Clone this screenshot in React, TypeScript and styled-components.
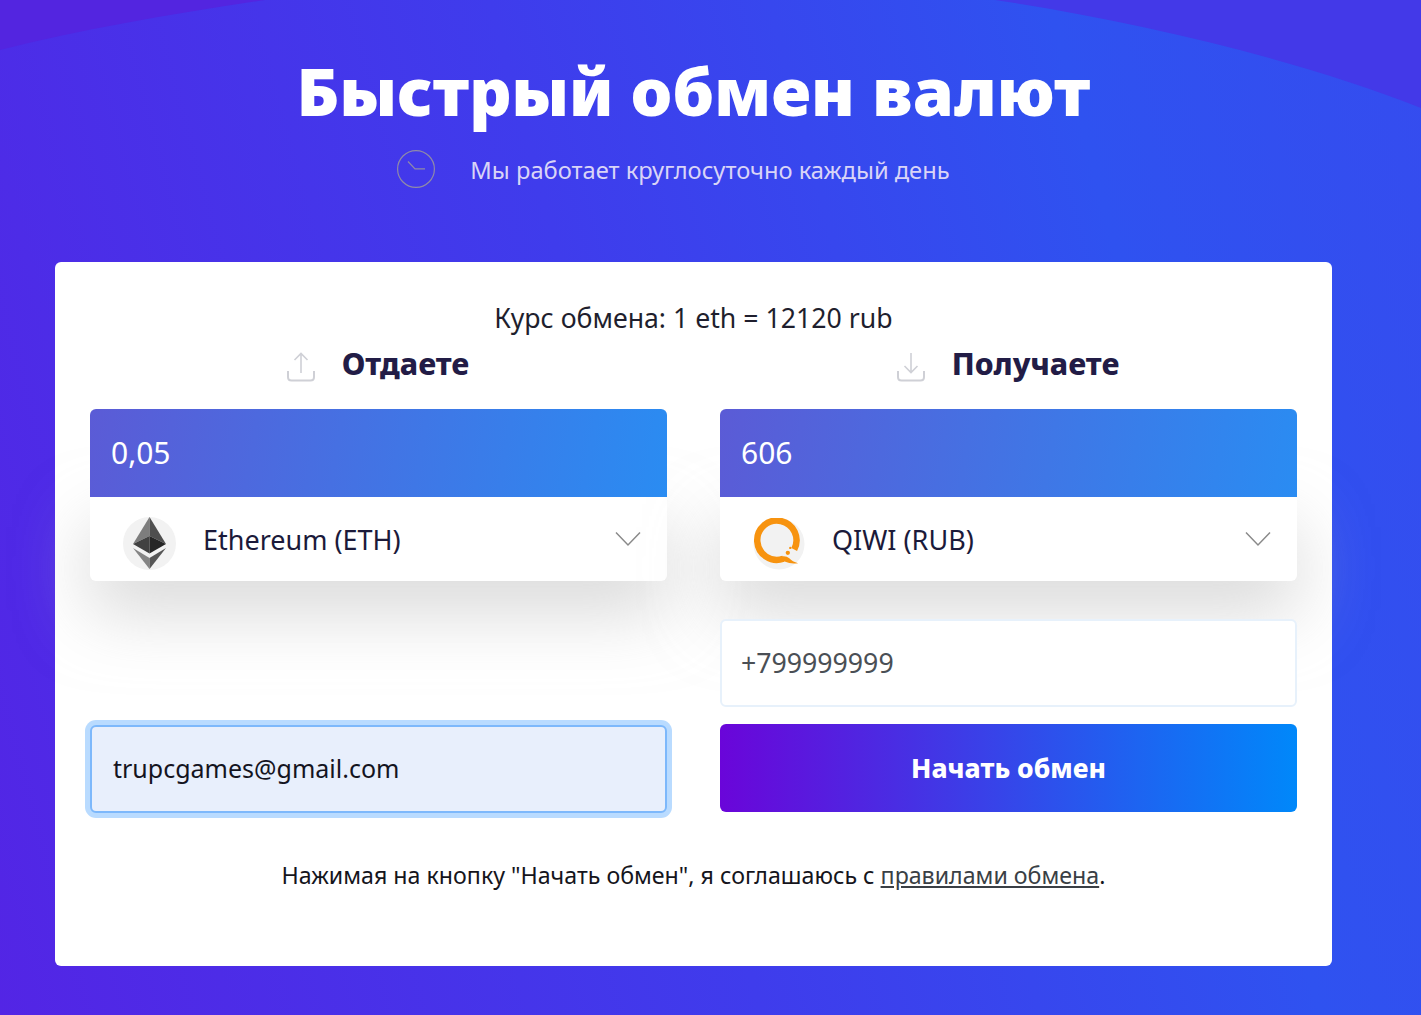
import styled, { createGlobalStyle } from 'styled-components';

const GlobalStyle = createGlobalStyle`
  html, body {
    margin: 0;
    padding: 0;
  }
  * {
    box-sizing: border-box;
  }
  body {
    font-family: 'Noto Sans', 'Open Sans', sans-serif;
  }
`;

const ClockIcon = () => (
  <svg width="38" height="38" viewBox="0 0 38 38" fill="none" stroke="#8f8aa8" strokeWidth="1.2">
    <circle cx="19" cy="19" r="18.4" />
    <path d="M11 11.5 L18 18.8 H28" />
  </svg>
);

const UploadIcon = () => (
  <svg width="28" height="30" viewBox="0 0 28 30" fill="none" stroke="#cfd0d6" strokeWidth="1.6">
    <path d="M14 21 V2 M7.5 8 L14 1.5 L20.5 8" />
    <path d="M1 19 V25 Q1 28.5 4.5 28.5 H23.5 Q27 28.5 27 25 V19" strokeWidth="2" />
  </svg>
);

const DownloadIcon = () => (
  <svg width="28" height="30" viewBox="0 0 28 30" fill="none" stroke="#cfd0d6" strokeWidth="1.6">
    <path d="M14 1 V20 M7.5 14 L14 20.5 L20.5 14" />
    <path d="M1 19 V25 Q1 28.5 4.5 28.5 H23.5 Q27 28.5 27 25 V19" strokeWidth="2" />
  </svg>
);

const Chevron = () => (
  <svg width="26" height="16" viewBox="0 0 26 16" fill="none" stroke="#8a8a8a" strokeWidth="1.5">
    <path d="M1 1.5 L13 14 L25 1.5" />
  </svg>
);

const EthLogo = () => (
  <svg width="53" height="53" viewBox="0 0 53 53">
    <circle cx="26.5" cy="26.5" r="26.5" fill="#f2f2f2" />
    <polygon points="26.5,0 10,27 26.5,19" fill="#7d7d7d" />
    <polygon points="26.5,0 43,27 26.5,19" fill="#4f4f4f" />
    <polygon points="10,27 26.5,19 26.5,36.5" fill="#414141" />
    <polygon points="43,27 26.5,19 26.5,36.5" fill="#262626" />
    <polygon points="10,31 26.5,41 26.5,52" fill="#858585" />
    <polygon points="43,31 26.5,41 26.5,52" fill="#565656" />
  </svg>
);

const QiwiLogo = () => (
  <svg width="52" height="52" viewBox="0 0 53 53">
    <circle cx="26.5" cy="26.5" r="26" fill="#f2f2f2" />
    <path
      d="M31 41.5 A20 20 0 1 1 42 32"
      fill="none"
      stroke="#f7930f"
      strokeWidth="6.6"
    />
    <path d="M26 40 Q33 37.5 37 41 Q40 44.5 46 46 Q38 47 33 44.5 Q30 43 26 43 Z" fill="#f7930f" />
    <circle cx="35.5" cy="35.5" r="2.2" fill="#f7930f" />
    <circle cx="38" cy="30.5" r="1.2" fill="#f7930f" />
  </svg>
);

const App = () => {
  return (
    <Page>
      <GlobalStyle />
      <Wave viewBox="0 0 1421 120" preserveAspectRatio="none">
        <path d="M0 0 H265 C170 14 80 30 0 50 Z" fill="#5325e0" />
        <path d="M995 0 C1140 22 1300 60 1421 108 V0 Z" fill="#4339e8" />
      </Wave>
      <Main>
        <Title>Быстрый обмен валют</Title>
        <Subtitle>
          <ClockIcon />
          <SubtitleText>Мы работает круглосуточно каждый день</SubtitleText>
        </Subtitle>
        <Card>
          <Rate>Курс обмена: 1 eth = 12120 rub</Rate>
          <Columns>
            <Column>
              <Heading>
                <UploadIcon />
                <HeadingText>Отдаете</HeadingText>
              </Heading>
              <Exchange>
                <Amount>0,05</Amount>
                <Currency>
                  <CurrencyLogo>
                    <EthLogo />
                  </CurrencyLogo>
                  <CurrencyName>Ethereum (ETH)</CurrencyName>
                  <Chevron />
                </Currency>
              </Exchange>
              <EmailInput type="email" defaultValue="trupcgames@gmail.com" />
            </Column>
            <Column>
              <Heading>
                <DownloadIcon />
                <HeadingText>Получаете</HeadingText>
              </Heading>
              <Exchange>
                <Amount>606</Amount>
                <Currency>
                  <CurrencyLogo>
                    <QiwiLogo />
                  </CurrencyLogo>
                  <CurrencyName>QIWI (RUB)</CurrencyName>
                  <Chevron />
                </Currency>
              </Exchange>
              <PhoneInput type="text" defaultValue="+799999999" />
              <StartButton type="button">Начать обмен</StartButton>
            </Column>
          </Columns>
          <Terms>
            Нажимая на кнопку "Начать обмен", я соглашаюсь с <TermsLink href="#">правилами обмена</TermsLink>.
          </Terms>
        </Card>
      </Main>
    </Page>
  );
};

export default App;

const Page = styled.div`
  position: relative;
  width: 100%;
  height: 1015px;
  overflow: hidden;
  background: linear-gradient(75deg, #5325e5 0%, #3f3cec 45%, #2f52f0 78%, #354cef 100%);
`;

const Wave = styled.svg`
  position: absolute;
  top: 0;
  left: 0;
  width: 100%;
  height: 120px;
`;

const Main = styled.div`
  position: relative;
  width: 1277px;
  margin-left: 55px;
  padding-top: 47px;
`;

const Title = styled.h1`
  margin: 0;
  color: #fff;
  font-size: 66.2px;
  font-weight: 900;
  line-height: 86px;
  text-align: center;
`;

const Subtitle = styled.div`
  display: flex;
  align-items: center;
  justify-content: center;
  gap: 35px;
  margin-top: 16px;
  padding-right: 40px;
`;

const SubtitleText = styled.span`
  padding-top: 2px;
  color: #d9d4f7;
  font-size: 23.7px;
  line-height: 38px;
`;

const Card = styled.div`
  margin-top: 73px;
  height: 704px;
  padding: 38px 35px 0;
  background: #fff;
  border-radius: 6px;
`;

const Rate = styled.div`
  color: #1f1f2e;
  font-size: 26.7px;
  line-height: 36px;
  text-align: center;
`;

const Columns = styled.div`
  display: grid;
  grid-template-columns: 577px 577px;
  column-gap: 53px;
`;

const Column = styled.div`
  display: flex;
  flex-direction: column;
`;

const Heading = styled.div`
  display: flex;
  align-items: center;
  justify-content: center;
  gap: 27px;
  height: 36px;
  margin: 10px 0 27px;

  svg {
    margin: 5px 0 0 -1px;
  }
`;

const HeadingText = styled.span`
  color: #221c46;
  font-size: 30.2px;
  font-weight: 800;
  line-height: 36px;
`;

const Exchange = styled.div`
  border-radius: 6px;
`;

const Amount = styled.div`
  position: relative;
  height: 88px;
  padding-left: 21px;
  border-radius: 6px 6px 0 0;
  background: linear-gradient(100deg, #5b5bd6 0%, #2a8cf2 100%);
  color: #fff;
  font-size: 30px;
  line-height: 88px;
`;

const Currency = styled.div`
  display: flex;
  align-items: center;
  height: 84px;
  padding: 0 26px 0 33px;
  border-radius: 0 0 6px 6px;
  background: #fff;
  box-shadow: 0 30px 70px rgba(190, 190, 190, 0.6);
`;

const CurrencyLogo = styled.div`
  display: flex;
  margin-top: 9px;
`;

const CurrencyName = styled.span`
  flex: 1;
  margin-left: 27px;
  color: #1b1a3a;
  font-size: 27px;
`;

const TextInput = styled.input`
  display: block;
  width: 100%;
  height: 88px;
  border-radius: 6px;
  font-family: inherit;
  outline: none;
`;

const EmailInput = styled(TextInput)`
  margin-top: 144px;
  padding: 0 21px 3px;
  border: 2px solid #7db8fb;
  background: #e8effc;
  color: #14141f;
  font-size: 25px;
  box-shadow: 0 0 0 5px #b9dbff;
`;

const PhoneInput = styled(TextInput)`
  position: relative;
  margin-top: 38px;
  padding: 0 19px 2px;
  border: 2px solid #e7f1fb;
  background: #fff;
  color: #4a4f55;
  font-size: 26.7px;
`;

const StartButton = styled.button`
  height: 88px;
  margin-top: 17px;
  border: none;
  border-radius: 6px;
  background: linear-gradient(90deg, #6a05d9 0%, #0088fa 100%);
  color: #fff;
  font-family: inherit;
  font-size: 26.5px;
  font-weight: 800;
`;

const Terms = styled.p`
  margin: 45px 0 0;
  color: #15151c;
  font-size: 23.2px;
  line-height: 34px;
  text-align: center;
`;

const TermsLink = styled.a`
  color: #3a3f45;
  text-decoration: underline;
`;
